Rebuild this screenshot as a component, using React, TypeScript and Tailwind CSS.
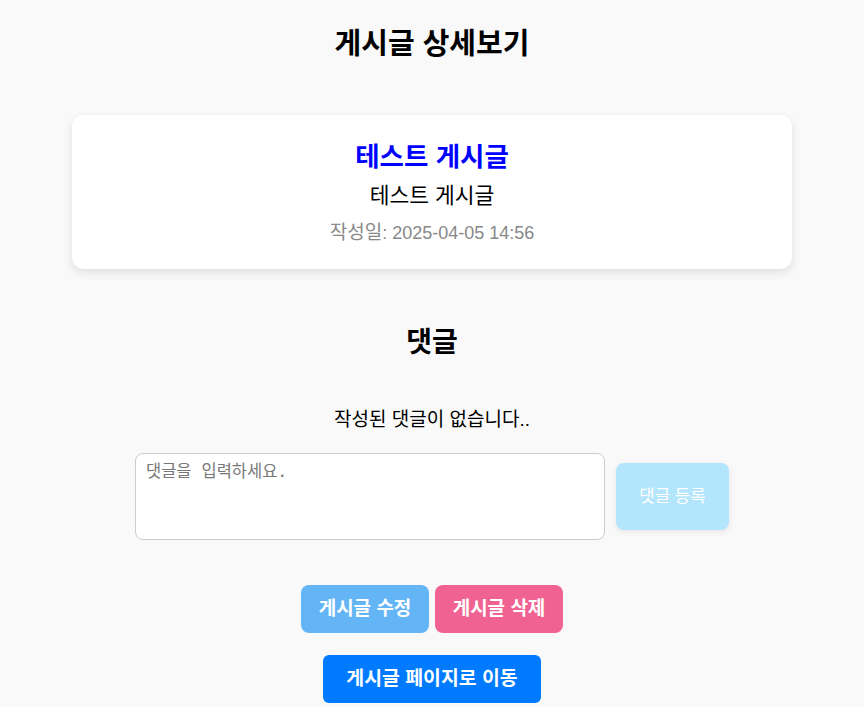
export default function App() {
  const sans = { fontFamily: '"Liberation Sans", "Noto Sans CJK KR", sans-serif' }
  return (
    <div className="min-h-[707px] bg-[#f9f9f9] text-black" style={sans}>
      <div className="flex flex-col items-center pt-[24px]">
        <h1 className="text-[29px] font-bold leading-[40px]">게시글 상세보기</h1>

        <div className="mt-[51px] flex w-[720px] flex-col items-center rounded-xl bg-white pt-[24px] pb-[23px] shadow-[0_4px_10px_rgba(0,0,0,0.1)]">
          <h2 className="text-[26.5px] font-bold leading-[36px] text-[#0000ff]">테스트 게시글</h2>
          <p className="mt-[6px] text-[21.5px] leading-[30px]">테스트 게시글</p>
          <p className="mt-[9px] text-[18px] leading-[26px] text-[#888]">
            <span className="text-[19px]">작성일</span>: 2025-04-05 14:56
          </p>
        </div>

        <h2 className="mt-[54px] text-[28px] font-bold leading-[40px]">댓글</h2>
        <p className="mt-[43px] text-[19px] leading-[28px]">작성된 댓글이 없습니다..</p>

        <div className="mt-[19px] flex items-center gap-[11px]">
          <textarea
            className="h-[87px] w-[470px] resize-none rounded-lg border border-[#ccc] bg-white px-[10px] py-[6px] text-[16.5px] placeholder:text-[#777]"
            style={{ fontFamily: '"DejaVu Sans Mono", "Noto Sans CJK KR", monospace' }}
            placeholder="댓글을 입력하세요."
          />
          <button className="h-[67px] w-[113px] rounded-lg bg-[#b3e5fc] text-[16.8px] text-white shadow-[0_2px_6px_rgba(0,0,0,0.08)]">
            댓글 등록
          </button>
        </div>

        <div className="mt-[45px] flex gap-[6px]">
          <button className="h-[48px] w-[128px] rounded-lg bg-[#64b5f6] text-[19px] font-bold text-white">
            게시글 수정
          </button>
          <button className="h-[48px] w-[128px] rounded-lg bg-[#f06292] text-[19px] font-bold text-white">
            게시글 삭제
          </button>
        </div>

        <button className="mt-[22px] h-[48px] w-[218px] rounded-md bg-[#007bff] text-[19.4px] font-bold text-white">
          게시글 페이지로 이동
        </button>
      </div>
    </div>
  )
}
